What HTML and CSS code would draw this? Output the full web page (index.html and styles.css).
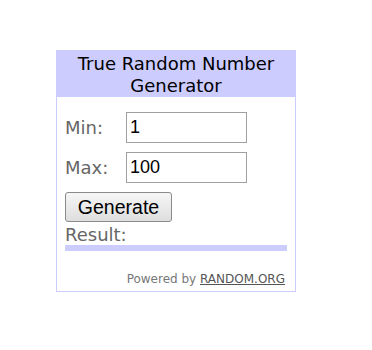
FILE: index.html
```html
<!DOCTYPE html>
<html>
<head>
<meta charset="utf-8">
<link rel="stylesheet" href="styles.css">
</head>
<body>
<div class="widget">
  <div class="widget-head">True Random Number Generator</div>
  <div class="widget-body">
    <div class="field">
      <span class="label">Min:</span>
      <input class="num" type="text" value="1">
    </div>
    <div class="field">
      <span class="label">Max:</span>
      <input class="num" type="text" value="100">
    </div>
    <button class="gen" type="button">Generate</button>
    <div class="result-label">Result:</div>
    <div class="result-bar"></div>
    <div class="powered">Powered by <a href="#">RANDOM.ORG</a></div>
  </div>
</div>
</body>
</html>
```
FILE: styles.css
```css
html, body {
  margin: 0;
  padding: 0;
  background: #ffffff;
}
body {
  padding: 50px 0 0 56px;
  font-family: "DejaVu Sans", Verdana, sans-serif;
}
.widget {
  width: 238px;
  height: 240px;
  border: 1px solid #ccccff;
  display: flex;
  flex-direction: column;
}
.widget-head {
  background: #ccccff;
  color: #000000;
  font-size: 18px;
  line-height: 22px;
  text-align: center;
  padding: 2px 4px 0;
}
.widget-body {
  padding: 15px 8px 0 8px;
  display: flex;
  flex-direction: column;
}
.field {
  display: flex;
  align-items: center;
  margin-bottom: 9px;
}
.label {
  width: 61px;
  font-size: 18px;
  color: #666666;
}
.num {
  box-sizing: border-box;
  width: 121px;
  height: 31px;
  margin: 0;
  border: 1px solid #a0a0a0;
  padding: 0 3px;
  font-family: "Liberation Sans", Arial, sans-serif;
  font-size: 18px;
  color: #000000;
  background: #ffffff;
  outline: none;
}
.gen {
  align-self: flex-start;
  box-sizing: border-box;
  width: 107px;
  height: 30px;
  margin: 0;
  padding: 0;
  border: 1px solid #8a8a8a;
  border-radius: 3px;
  background: linear-gradient(#f6f6f6, #dedede);
  font-family: "Liberation Sans", Arial, sans-serif;
  font-size: 19.5px;
  color: #000000;
}
.result-label {
  font-size: 18px;
  line-height: 20px;
  color: #666666;
  margin-top: 3px;
}
.result-bar {
  height: 6px;
  background: #ccccff;
}
.powered {
  margin-top: 21px;
  text-align: right;
  font-size: 12px;
  color: #777777;
  padding-right: 2px;
}
.powered a {
  color: #555555;
  text-decoration: underline;
}
```
